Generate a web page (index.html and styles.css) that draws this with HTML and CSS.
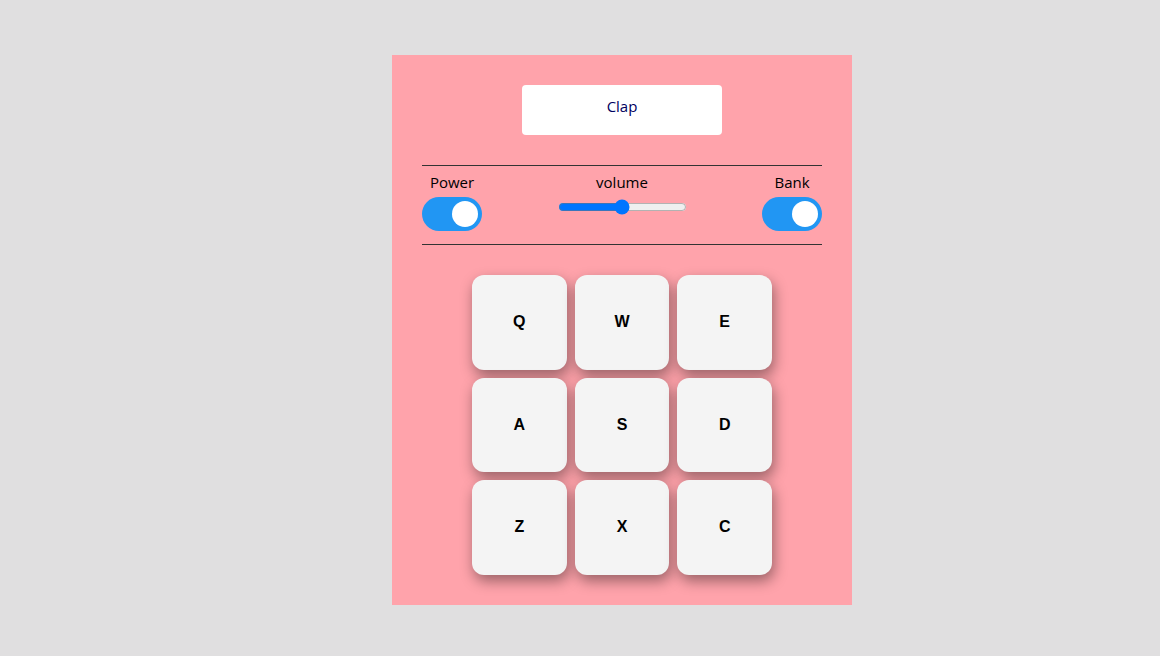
FILE: index.html
```html
<!DOCTYPE html>
<html>
<head>
<meta charset="utf-8">
<link rel="stylesheet" href="styles.css">
</head>
<body>
<main class="page">
  <div class="drum-machine">
    <div class="display">Clap</div>
    <div class="controls">
      <div class="control">
        <span class="label">Power</span>
        <label class="switch"><input type="checkbox" checked><span class="slider"></span></label>
      </div>
      <div class="control">
        <span class="label">volume</span>
        <input class="volume" type="range" min="0" max="100" value="50">
      </div>
      <div class="control">
        <span class="label">Bank</span>
        <label class="switch"><input type="checkbox" checked><span class="slider"></span></label>
      </div>
    </div>
    <div class="pads">
      <button class="pad">Q</button>
      <button class="pad">W</button>
      <button class="pad">E</button>
      <button class="pad">A</button>
      <button class="pad">S</button>
      <button class="pad">D</button>
      <button class="pad">Z</button>
      <button class="pad">X</button>
      <button class="pad">C</button>
    </div>
  </div>
</main>
</body>
</html>
```
FILE: styles.css
```css
html, body {
  margin: 0;
  padding: 0;
  background: #e0dfe0;
  font-family: "Open Sans", "Noto Sans", sans-serif;
}
.page {
  padding: 55px 0 0 392px;
  min-height: 601px;
}
.drum-machine {
  width: 460px;
  height: 550px;
  box-sizing: border-box;
  padding: 30px 30px 0;
  background: #ffa3ab;
  display: flex;
  flex-direction: column;
  align-items: center;
}
.display {
  width: 200px;
  height: 50px;
  background: #fff;
  border-radius: 4px;
  color: #000060;
  font-size: 15px;
  text-align: center;
  line-height: 20px;
  padding-top: 11px;
  box-sizing: border-box;
}
.controls {
  margin-top: 30px;
  width: 400px;
  border-top: 1px solid #333;
  border-bottom: 1px solid #333;
  display: flex;
  justify-content: space-between;
  padding: 6px 0 13px;
}
.control {
  display: flex;
  flex-direction: column;
  align-items: center;
}
.label {
  font-size: 15px;
  line-height: 20px;
  color: #000;
  margin-bottom: 5px;
}
.switch {
  position: relative;
  display: inline-block;
  width: 60px;
  height: 34px;
}
.switch input {
  opacity: 0;
  width: 0;
  height: 0;
}
.slider {
  position: absolute;
  inset: 0;
  background: #2196f3;
  border-radius: 34px;
}
.slider::before {
  content: "";
  position: absolute;
  width: 26px;
  height: 26px;
  left: 30px;
  top: 4px;
  background: #fff;
  border-radius: 50%;
}
.volume {
  width: 129px;
  margin: 2px 0 0;
  accent-color: #0075ff;
}
.pads {
  margin-top: 30px;
  width: 300px;
  display: grid;
  grid-template-columns: repeat(3, 1fr);
  grid-auto-rows: 94.5px;
  column-gap: 8px;
  row-gap: 8px;
}
.pad {
  border: none;
  border-radius: 12px;
  background: #f4f4f4;
  box-shadow: 2px 6px 14px rgba(0, 0, 0, 0.4);
  font-family: "Liberation Sans", Arial, sans-serif;
  font-weight: bold;
  font-size: 16px;
  color: #000;
  padding: 0;
}
```
